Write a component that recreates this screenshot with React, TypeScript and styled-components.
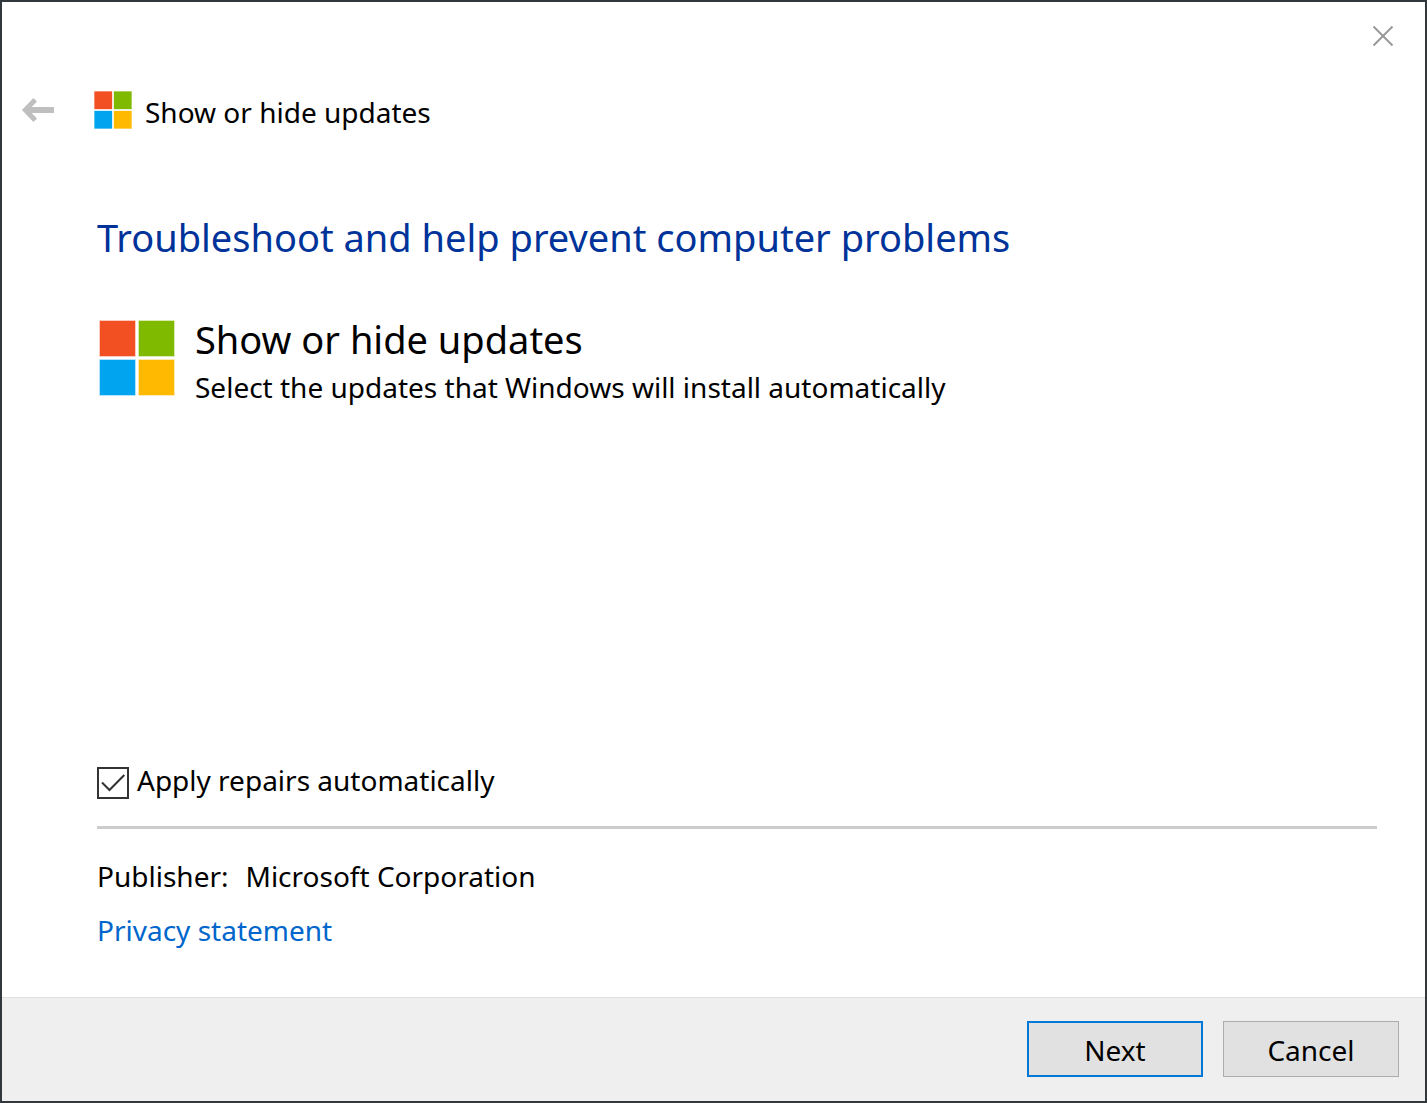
import React from 'react';
import styled, { createGlobalStyle } from 'styled-components';

const Global = createGlobalStyle`
  *, *::before, *::after { box-sizing: border-box; }
  body { margin: 0; background: #fff; color: #000; }
  body, button, input { font-family: "Noto Sans", "Open Sans", sans-serif; }
  h1, h2, p { margin: 0; font-weight: 400; }
`;

const Dialog = styled.div`
  min-height: 100vh;
  display: flex;
  flex-direction: column;
  background: #fff;
  border: 2px solid #32373c;
`;

const TitleBar = styled.div`
  display: flex;
  justify-content: flex-end;
  padding: 12px 20px 0 0;
`;

const IconButton = styled.button`
  display: flex;
  align-items: center;
  justify-content: center;
  width: 44px;
  height: 44px;
  padding: 0;
  border: 0;
  background: none;
`;

const Header = styled.header`
  display: flex;
  align-items: center;
  padding: 28px 20px 0 14px;
`;

const HeaderText = styled.p`
  margin: 4px 0 0 13px;
  font-size: 28px;
  line-height: 44px;
`;

const HeaderLogo = styled.div`
  display: flex;
  margin-left: 34px;
`;

const Content = styled.main`
  flex: 1;
  display: flex;
  flex-direction: column;
  padding: 75px 48px 45px 95px;
`;

const Heading = styled.h1`
  font-size: 38px;
  line-height: 56px;
  color: #003399;
`;

const Tool = styled.section`
  display: flex;
  gap: 20px;
  margin-top: 48px;
  padding-left: 2px;
`;

const ToolLogo = styled.div`
  padding-top: 7px;
`;

const ToolTitle = styled.h2`
  font-size: 38px;
  line-height: 52px;
`;

const Body = styled.p`
  font-size: 28px;
  line-height: 44px;
`;

const Options = styled.div`
  margin-top: auto;
  padding-bottom: 22px;
  border-bottom: 3px solid #ccc;
`;

const Option = styled.label`
  display: inline-flex;
  align-items: center;
  gap: 8px;
  font-size: 28px;
  line-height: 44px;
`;

const Check = styled.input`
  appearance: none;
  width: 32px;
  height: 32px;
  margin: 0;
  border: 2px solid #333;
  background: #fff;
  grid-area: 1 / 1;
`;

const CheckBox = styled.span`
  display: grid;
  place-items: center;
  padding-top: 6px;

  svg { grid-area: 1 / 1; pointer-events: none; visibility: hidden; }
  input:checked + svg { visibility: visible; }
`;

const Publisher = styled.div`
  display: flex;
  gap: 17px;
  margin: 25px 0 10px;
`;

const Link = styled.a`
  align-self: flex-start;
  font-size: 28px;
  line-height: 44px;
  color: #0066cc;
  text-decoration: none;
`;

const Footer = styled.footer`
  display: flex;
  justify-content: flex-end;
  gap: 20px;
  padding: 23px 26px 24px;
  background: #efefef;
  border-top: 1px solid #dfdfdf;
`;

const Button = styled.button<{ $primary?: boolean }>`
  width: 176px;
  height: 56px;
  padding: 2px 0 0;
  font-size: 28px;
  line-height: 44px;
  color: #000;
  background: #e1e1e1;
  border: ${p => (p.$primary ? '2px solid #0078d7' : '1px solid #adadad')};
`;

const Logo = ({ size }: { size: number }) => (
  <svg width={size} height={size} viewBox="0 0 76 76" strokeWidth="1.5" strokeOpacity="0.4" display="block" aria-hidden="true">
    <path fill="#f25022" stroke="#f25022" d="M1 1h35v35H1z" />
    <path fill="#7fba00" stroke="#7fba00" d="M40 1h35v35H40z" />
    <path fill="#00a4ef" stroke="#00a4ef" d="M1 40h35v35H1z" />
    <path fill="#ffb900" stroke="#ffb900" d="M40 40h35v35H40z" />
  </svg>
);

export default function App() {
  return (
    <>
      <Global />
      <Dialog role="dialog" aria-label="Show or hide updates">
        <TitleBar>
          <IconButton aria-label="Close">
            <svg width="22" height="22" viewBox="0 0 22 22" stroke="#999" strokeWidth="2" fill="none">
              <path d="M1.5 1.5l19 19M20.5 1.5l-19 19" />
            </svg>
          </IconButton>
        </TitleBar>
        <Header>
          <IconButton aria-label="Back" disabled>
            <svg width="32" height="24" viewBox="0 0 32 24" fill="none" stroke="#bfbfbf" overflow="visible">
              <path strokeWidth="6" d="M32 12H4" />
              <path strokeWidth="5" d="M13.2 1.8L3.4 12l9.8 10.2" />
            </svg>
          </IconButton>
          <HeaderLogo><Logo size={38} /></HeaderLogo>
          <HeaderText>Show or hide updates</HeaderText>
        </Header>
        <Content>
          <Heading>Troubleshoot and help prevent computer problems</Heading>
          <Tool>
            <ToolLogo><Logo size={76} /></ToolLogo>
            <div>
              <ToolTitle>Show or hide updates</ToolTitle>
              <Body>Select the updates that Windows will install automatically</Body>
            </div>
          </Tool>
          <Options>
            <Option>
              <CheckBox>
                <Check type="checkbox" defaultChecked />
                <svg width="24" height="20" viewBox="0 0 24 20" stroke="#333" strokeWidth="2" fill="none">
                  <path d="M1 9.5L8.5 17 23.3 2" />
                </svg>
              </CheckBox>
              Apply repairs automatically
            </Option>
          </Options>
          <Publisher>
            <Body>Publisher:</Body>
            <Body>Microsoft Corporation</Body>
          </Publisher>
          <Link href="#privacy">Privacy statement</Link>
        </Content>
        <Footer>
          <Button $primary>Next</Button>
          <Button>Cancel</Button>
        </Footer>
      </Dialog>
    </>
  );
}
